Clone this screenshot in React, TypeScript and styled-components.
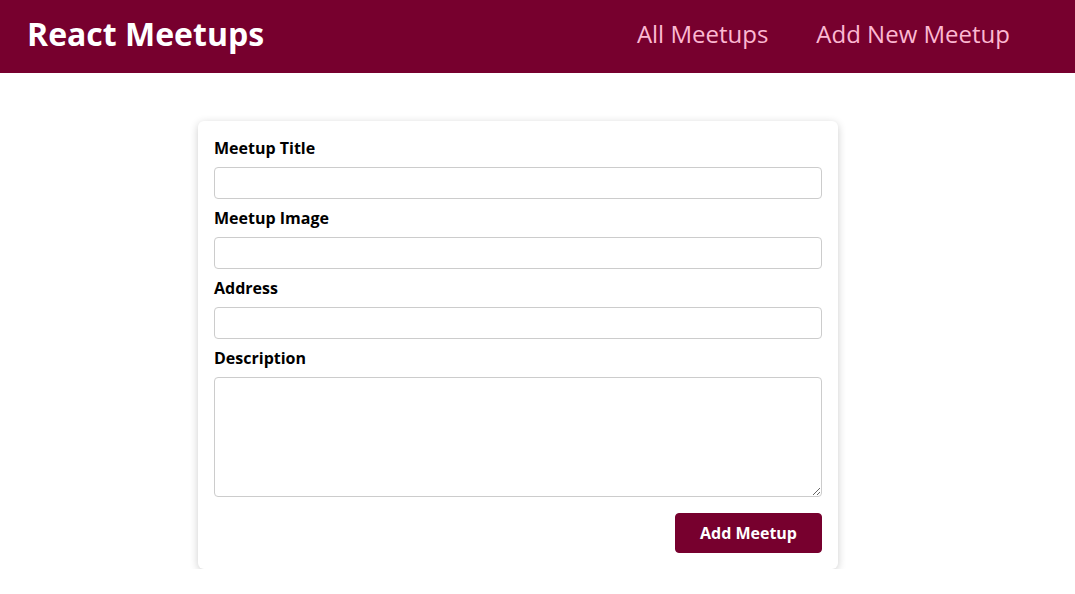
import React from "react";
import styled, { createGlobalStyle } from "styled-components";

const GlobalStyle = createGlobalStyle`
  * { box-sizing: border-box; }
  body {
    margin: 0;
    font-family: "Open Sans", "Noto Sans", sans-serif;
    background: #ffffff;
  }
`;

const Header = styled.header`
  width: 100%;
  height: 73px;
  display: flex;
  align-items: center;
  justify-content: space-between;
  background-color: #77002e;
  padding: 0 65px 6px 27px;
`;

const Logo = styled.div`
  font-size: 32px;
  color: white;
  font-weight: bold;
`;

const NavList = styled.ul`
  list-style: none;
  margin: 0;
  padding: 0;
  display: flex;
  align-items: baseline;
`;

const NavItem = styled.li`
  margin-left: 48px;
`;

const NavLink = styled.a`
  text-decoration: none;
  font-size: 24px;
  color: #fcb8d2;
`;

const Main = styled.main`
  margin: 48px 0 0 198px;
  width: 640px;
`;

const Card = styled.div`
  background: white;
  border-radius: 6px;
  box-shadow: 0 2px 8px rgba(0, 0, 0, 0.2);
`;

const Form = styled.form`
  padding: 16px;
`;

const Control = styled.div`
  margin-bottom: 8px;
`;

const Label = styled.label`
  display: block;
  font-weight: bold;
  margin-bottom: 8px;
  font-size: 16px;
  color: #000;
`;

const Input = styled.input`
  display: block;
  font: inherit;
  font-size: 16px;
  border-radius: 4px;
  border: 1px solid #ccc;
  padding: 4px;
  width: 100%;
  line-height: 22px;
  height: 32px;
`;

const TextArea = styled.textarea`
  display: block;
  font: inherit;
  font-size: 16px;
  border-radius: 4px;
  border: 1px solid #ccc;
  padding: 4px;
  width: 100%;
  height: 120px;
`;

const Actions = styled.div`
  margin-top: 16px;
  text-align: right;
`;

const Button = styled.button`
  font: inherit;
  font-size: 16px;
  cursor: pointer;
  background-color: #77002e;
  color: white;
  padding: 8px 24px;
  border: 1px solid #77002e;
  border-radius: 4px;
  font-weight: bold;
  height: 40px;
`;

export default function App() {
  return (
    <>
      <GlobalStyle />
      <Header>
        <Logo>React Meetups</Logo>
        <nav>
          <NavList>
            <NavItem>
              <NavLink href="#">All Meetups</NavLink>
            </NavItem>
            <NavItem>
              <NavLink href="#">Add New Meetup</NavLink>
            </NavItem>
          </NavList>
        </nav>
      </Header>
      <Main>
        <Card>
          <Form onSubmit={(e) => e.preventDefault()}>
            <Control>
              <Label htmlFor="title">Meetup Title</Label>
              <Input type="text" id="title" />
            </Control>
            <Control>
              <Label htmlFor="image">Meetup Image</Label>
              <Input type="url" id="image" />
            </Control>
            <Control>
              <Label htmlFor="address">Address</Label>
              <Input type="text" id="address" />
            </Control>
            <Control>
              <Label htmlFor="description">Description</Label>
              <TextArea id="description" rows={5} />
            </Control>
            <Actions>
              <Button>Add Meetup</Button>
            </Actions>
          </Form>
        </Card>
      </Main>
    </>
  );
}
